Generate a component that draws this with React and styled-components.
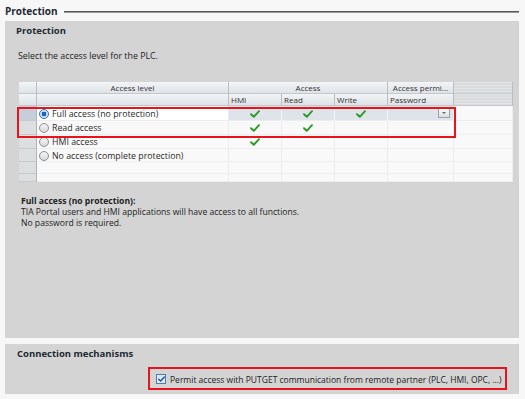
import React from 'react'
import styled, { createGlobalStyle } from 'styled-components'

const GlobalStyle = createGlobalStyle`
  html, body { margin: 0; padding: 0; background: #f7f7f7; }
  body { font-family: "Open Sans", "Noto Sans", sans-serif; color: #222; }
`

const Page = styled.div`
  width: 525px;
  height: 399px;
  background: #f7f7f7;
  overflow: hidden;
`

const TitleBar = styled.div`
  height: 21px;
  display: flex;
  align-items: center;
  padding-left: 5px;
  gap: 6px;
`

const Title = styled.span`
  font-weight: 700;
  font-size: 10px;
  color: #1e2a33;
`

const TitleLine = styled.div`
  flex: 1;
  margin-right: 6px;
  margin-top: 2px;
  height: 1px;
  background: #555;
  box-shadow: 0 1px 0 #9a9a9a;
`

const Panel = styled.section`
  margin: 0 6px 0 5px;
  background: #d4d4d4;
  height: ${p => p.$h}px;
  padding: ${p => p.$pad};
  box-sizing: border-box;
`

const Heading = styled.div`
  font-weight: 700;
  font-size: 9.5px;
  color: #1e2a33;
  height: 20px;
  line-height: 20px;
`

const Hint = styled.div`
  font-size: 8.8px;
  margin: 9px 0 0 2px;
  height: 12px;
  line-height: 12px;
`

const TableWrap = styled.div`
  position: relative;
  margin: 20px 0 0 3px;
  width: 493px;
`

const Grid = styled.div`
  display: grid;
  grid-template-columns: 18px 192px 53px 53px 53px 66px 59px;
  grid-template-rows: 12px 12px 15px 14px 14px 13px 12px 8px;
  background: #fafafa;
  font-size: 8px;
`

const Head = styled.div`
  grid-column: ${p => p.$col || 'auto'};
  background: linear-gradient(#f2f4f6, #dfe3e7);
  border-right: 1px solid #b9bec4;
  border-bottom: 1px solid #c4c8cc;
  display: flex;
  align-items: center;
  justify-content: ${p => (p.$left ? 'flex-start' : 'center')};
  padding-left: ${p => (p.$left ? '2px' : '0')};
  color: #333;
  line-height: 1;
  box-sizing: border-box;
  overflow: hidden;
  white-space: nowrap;
`

const Blank = styled.div`
  background: ${p => (p.$dim ? 'repeating-linear-gradient(#e2e4e6 0 1px, #d9dbdd 1px 3px)' : 'linear-gradient(#f2f4f6, #dfe3e7)')};
  border-right: 1px solid #b9bec4;
  border-bottom: 1px solid #c4c8cc;
  box-sizing: border-box;
`

const RowHead = styled.div`
  background: ${p => (p.$sel ? '#c6ceda' : '#dcdee0')};
  border-right: 1px solid #b0b4b8;
  border-bottom: 1px solid #c7cacd;
  box-sizing: border-box;
`

const Cell = styled.div`
  background: ${p => (p.$sel ? '#dfe4ea' : p.$white ? '#fff' : '#f9f9f9')};
  border-right: 1px solid ${p => (p.$sel ? '#f3f5f7' : '#ececec')};
  border-bottom: 1px solid #eeeeee;
  box-sizing: border-box;
  display: flex;
  align-items: center;
  justify-content: ${p => (p.$left ? 'flex-start' : p.$right ? 'flex-end' : 'center')};
  padding: ${p => (p.$left ? '1px 0 0 2px' : p.$right ? '0 3px 0 0' : '1px 0 0 0')};
  gap: 3px;
  font-size: 8.8px;
  color: #2a2a2a;
  white-space: nowrap;
`

const Radio = styled.span`
  width: 10px;
  height: 10px;
  border-radius: 50%;
  box-sizing: border-box;
  border: 1px solid ${p => (p.$on ? '#3b6ea8' : '#8e8e8e')};
  background: ${p => (p.$on ? 'radial-gradient(circle, #1b64c4 0 2.2px, #cfe3f7 2.6px)' : 'linear-gradient(#f4f4f4, #dadada)')};
  flex: none;
`

const DropBtn = styled.span`
  width: 12px;
  height: 10px;
  box-sizing: border-box;
  border: 1px solid #9ba2aa;
  background: linear-gradient(#fafafa, #dcdfe2);
  display: flex;
  align-items: center;
  justify-content: center;
  &::after {
    content: '';
    border-left: 2.5px solid transparent;
    border-right: 2.5px solid transparent;
    border-top: 2.5px solid #666;
  }
`

const Frame = styled.div`
  position: absolute;
  left: ${p => p.$x}px;
  top: ${p => p.$y}px;
  width: ${p => p.$w}px;
  height: ${p => p.$h}px;
  border: 2px solid #e8141b;
  box-sizing: border-box;
  pointer-events: none;
`

const Desc = styled.div`
  margin: 14px 0 0 5px;
  font-size: 8.6px;
  line-height: 11px;
  b { font-weight: 700; }
`

const Gap = styled.div`
  height: 6px;
`

const CheckRow = styled.div`
  position: relative;
  display: flex;
  align-items: center;
  gap: 4px;
  margin: 9px 0 0 139px;
  height: 12px;
  font-size: 8.5px;
  white-space: nowrap;
`

const Box = styled.span`
  width: 10px;
  height: 10px;
  box-sizing: border-box;
  border: 1px solid #587aa8;
  background: #dbe8f7;
  display: flex;
  align-items: center;
  justify-content: center;
`

const Tick = ({ color = '#2b9a2b', w = 10, h = 8 }) => (
  <svg width={w} height={h} viewBox="0 0 10 8">
    <path d="M1 4.2 L3.8 6.8 L9 1.2" fill="none" stroke={color} strokeWidth="1.9" strokeLinecap="round" strokeLinejoin="round" />
  </svg>
)

const rows = [
  { label: 'Full access (no protection)', on: true, hmi: true, read: true, write: true },
  { label: 'Read access', hmi: true, read: true },
  { label: 'HMI access', hmi: true },
  { label: 'No access (complete protection)' },
]

export default function App () {
  return (
    <Page>
      <GlobalStyle />
      <TitleBar>
        <Title>Protection</Title>
        <TitleLine />
      </TitleBar>

      <Panel $h={317} $pad="0 0 0 11px">
        <Heading>Protection</Heading>
        <Hint>Select the access level for the PLC.</Hint>

        <TableWrap>
          <Grid>
            <Blank />
            <Head>Access level</Head>
            <Head $col="span 3">Access</Head>
            <Head>Access permi...</Head>
            <Blank $dim />

            <Blank />
            <Head />
            <Head $left>HMI</Head>
            <Head $left>Read</Head>
            <Head $left>Write</Head>
            <Head $left>Password</Head>
            <Blank $dim />

            {rows.map(r => (
              <React.Fragment key={r.label}>
                <RowHead $sel={r.on} />
                <Cell $left $white={r.on}>
                  <Radio $on={r.on} />
                  {r.label}
                </Cell>
                <Cell $sel={r.on}>{r.hmi && <Tick />}</Cell>
                <Cell $sel={r.on}>{r.read && <Tick />}</Cell>
                <Cell $sel={r.on}>{r.write && <Tick />}</Cell>
                <Cell $sel={r.on} $right>{r.on && <DropBtn />}</Cell>
                <Cell />
              </React.Fragment>
            ))}
            {[0, 1].map(i => (
              <React.Fragment key={'e' + i}>
                <RowHead />
                <Cell /><Cell /><Cell /><Cell /><Cell /><Cell />
              </React.Fragment>
            ))}
          </Grid>
          <Frame $x={-2} $y={25} $w={439} $h={31} />
        </TableWrap>

        <Desc>
          <b>Full access (no protection):</b>
          <br />
          TIA Portal users and HMI applications will have access to all functions.
          <br />
          No password is required.
        </Desc>
      </Panel>

      <Gap />

      <Panel $h={50} $pad="0 0 0 12px">
        <Heading>Connection mechanisms</Heading>
        <CheckRow>
          <Frame $x={-8} $y={-6} $w={359} $h={23} />
          <Box><Tick color="#1c4f96" w={7} h={6} /></Box>
          Permit access with PUTGET communication from remote partner (PLC, HMI, OPC, ...)
        </CheckRow>
      </Panel>
    </Page>
  )
}
